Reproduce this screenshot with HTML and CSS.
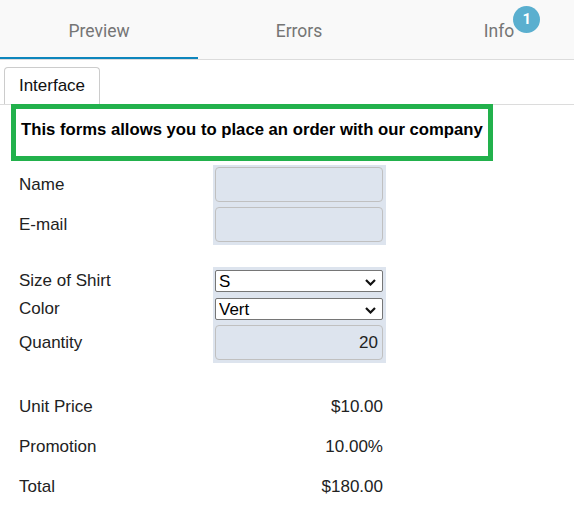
FILE: index.html
```html
<!DOCTYPE html>
<html lang="en">
<head>
    <meta charset="UTF-8">
    <meta name="viewport" content="width=device-width, initial-scale=1.0">
    <title>Order Form</title>
    <link rel="stylesheet" href="styles.css">
</head>
<body>
    <div class="tabs">
        <div class="tab active"><span class="tab-label">Preview</span></div>
        <div class="tab"><span class="tab-label">Errors</span></div>
        <div class="tab"><span class="tab-label">Info<span class="badge">1</span></span></div>
    </div>

    <div class="subtabs">
        <div class="subtab">Interface</div>
    </div>

    <div class="intro">This forms allows you to place an order with our company</div>

    <div class="form">
        <div class="label">Name</div>
        <div class="cell cell-input"><input class="field" type="text"></div>
        <div class="label">E-mail</div>
        <div class="cell cell-input"><input class="field" type="text"></div>

        <div class="spacer"></div>

        <div class="label">Size of Shirt</div>
        <div class="cell cell-select">
            <div class="select-wrap">
                <select class="choice">
                    <option>S</option>
                    <option>M</option>
                    <option>L</option>
                </select>
                <svg class="chevron" width="11" height="7" viewBox="0 0 11 7"><polyline points="1,1 5.5,5.5 10,1" fill="none" stroke="#111" stroke-width="2.2"/></svg>
            </div>
        </div>
        <div class="label">Color</div>
        <div class="cell cell-select">
            <div class="select-wrap">
                <select class="choice">
                    <option>Vert</option>
                    <option>Rouge</option>
                    <option>Bleu</option>
                </select>
                <svg class="chevron" width="11" height="7" viewBox="0 0 11 7"><polyline points="1,1 5.5,5.5 10,1" fill="none" stroke="#111" stroke-width="2.2"/></svg>
            </div>
        </div>
        <div class="label">Quantity</div>
        <div class="cell cell-input"><input class="field number" type="text" value="20"></div>

        <div class="spacer spacer-wide"></div>

        <div class="label row">Unit Price</div>
        <div class="value row">$10.00</div>
        <div class="label row">Promotion</div>
        <div class="value row">10.00%</div>
        <div class="label row">Total</div>
        <div class="value row">$180.00</div>
    </div>
</body>
</html>
```

FILE: styles.css
```css
body {
    margin: 0;
    font-family: "Liberation Sans", Arial, sans-serif;
    color: #222;
    background-color: #fff;
    overflow: hidden;
}

/* top tab bar */
.tabs {
    display: flex;
    height: 59px;
    background-color: #f9f9f9;
    border-bottom: 1px solid #dcdcdc;
    overflow: hidden;
}
.tab {
    flex: 0 0 198px;
    margin-right: 2px;
    box-sizing: border-box;
    height: 59px;
    padding-top: 5px;
    display: flex;
    align-items: center;
    justify-content: center;
    font-family: Roboto, sans-serif;
    font-size: 17.5px;
    color: #757575;
    border-bottom: 2px solid transparent;
}
.tab.active {
    border-bottom-color: #0e86bd;
}
.tab-label {
    position: relative;
}
.badge {
    position: absolute;
    left: calc(100% - 1px);
    top: -15px;
    width: 27px;
    height: 27px;
    border-radius: 50%;
    background-color: #5aafcf;
    color: #fff;
    font-size: 15px;
    font-weight: bold;
    line-height: 27px;
    text-align: center;
}

/* sub tabs */
.subtabs {
    display: flex;
    padding: 7px 0 0 4px;
    border-bottom: 1px solid #dcdcdc;
}
.subtab {
    box-sizing: border-box;
    width: 96px;
    height: 37px;
    border: 1px solid #ccc;
    border-bottom: none;
    border-radius: 4px 4px 0 0;
    display: flex;
    align-items: center;
    justify-content: center;
    font-size: 17px;
    color: #111;
}

.intro {
    position: relative;
    box-sizing: border-box;
    width: 482px;
    margin: -1px 0 0 11px;
    padding: 12px 4px 18px 5px;
    border: 5px solid #22b14c;
    font-size: 16.7px;
    font-weight: bold;
    line-height: 17px;
    color: #000;
    white-space: nowrap;
}

/* order form */
.form {
    display: grid;
    grid-template-columns: 194px 173px;
    margin: 4px 0 0 19px;
    font-size: 17px;
}
.label {
    display: flex;
    align-items: center;
}
.cell {
    background-color: #dde4ee;
    padding: 2px 3px 3px 2px;
}
.cell-select {
    padding: 3px 3px 3px 2px;
}
.spacer {
    grid-column: 1 / 3;
    height: 22px;
}
.spacer-wide {
    height: 24px;
}
.field {
    display: block;
    box-sizing: border-box;
    width: 100%;
    height: 35px;
    margin: 0;
    border: 1px solid #c0c0c0;
    border-radius: 4px;
    background-color: transparent;
    font-family: "Liberation Sans", Arial, sans-serif;
    font-size: 17px;
    color: #222;
    padding: 0 4px;
}
.field.number {
    text-align: right;
}
.select-wrap {
    position: relative;
}
.choice {
    display: block;
    box-sizing: border-box;
    width: 100%;
    height: 22px;
    margin: 0;
    border: 1px solid #767676;
    border-radius: 2px;
    background-color: #fff;
    font-family: "Liberation Sans", Arial, sans-serif;
    font-size: 17px;
    color: #000;
    padding: 0 20px 0 3px;
    appearance: none;
    -webkit-appearance: none;
}
.chevron {
    position: absolute;
    right: 7px;
    top: 9px;
    pointer-events: none;
}
.row {
    height: 40px;
}
.value {
    display: flex;
    align-items: center;
    justify-content: flex-end;
    padding-right: 3px;
}
```
